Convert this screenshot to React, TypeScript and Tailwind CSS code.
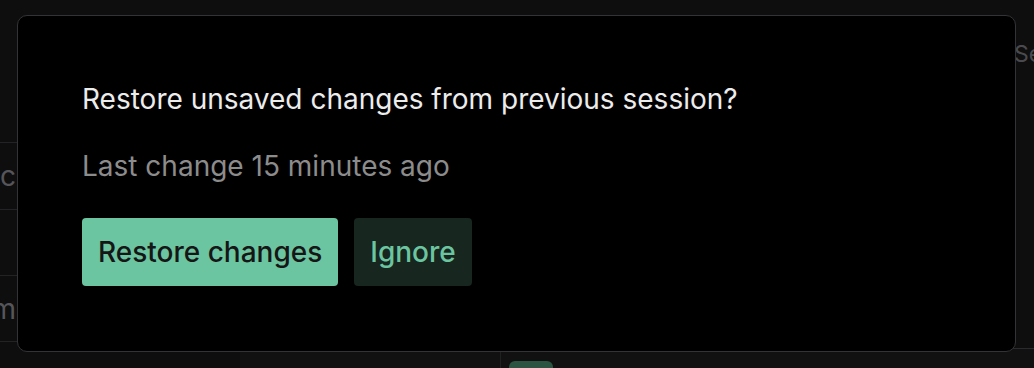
import React from "react";

function BackgroundRows() {
  return (
    <div className="flex h-full">
      {/* left list, mostly hidden behind the dialog */}
      <div className="w-[240px] shrink-0 flex flex-col pt-[142px] text-[#56565a] text-[28px] leading-none">
        <div className="h-[67px] border-t border-[#232326] flex items-center">
          <span className="w-[16px] flex justify-end whitespace-nowrap">Desc</span>
        </div>
        <div className="h-[66px] border-t border-[#232326]" />
        <div className="h-[66px] border-t border-[#232326] flex items-center">
          <span className="w-[16px] flex justify-end whitespace-nowrap">Item</span>
        </div>
        <div className="flex-1 border-t border-[#232326]" />
      </div>
      <div className="flex-1 flex flex-col">
        <div className="flex-1 flex justify-end pt-[43px] text-[23px] leading-none text-[#4a4a4e]">
          <span className="w-[20px] whitespace-nowrap">Settings</span>
        </div>
        <div className="h-[20px] flex pl-[260px] border-t border-[#2a2a2e] bg-[#111]">
          <div className="border-l border-[#202023] h-full pl-[8px] pt-[12px]">
            <div className="w-[44px] h-[10px] rounded-t-[6px] bg-[#2c5443]" />
          </div>
        </div>
      </div>
    </div>
  );
}

export default function App() {
  return (
    <div
      className="relative w-[1034px] h-[368px] overflow-hidden bg-[#0e0e0f]"
      style={{ fontFamily: "Inter, 'Noto Sans', sans-serif" }}
    >
      <BackgroundRows />

      {/* Restore dialog */}
      <div className="absolute left-[17px] top-[15px] w-[999px] h-[337px] bg-black border border-[#333337] rounded-[10px] px-16 pt-[66px]">
        <p className="text-[28px] leading-[34px] text-[#ececec]">
          Restore unsaved changes from previous session?
        </p>
        <p className="mt-[33px] text-[28px] leading-[34px] text-[#8c8c8c]">
          Last change 15 minutes ago
        </p>
        <div className="mt-[35px] flex gap-4">
          <button className="h-[68px] px-4 rounded-[4px] bg-[#6bc5a0] text-[#161616] text-[28px] font-medium">
            Restore changes
          </button>
          <button className="h-[68px] px-4 rounded-[4px] bg-[#17261f] text-[#6bc5a0] text-[28px] font-medium">
            Ignore
          </button>
        </div>
      </div>
    </div>
  );
}
